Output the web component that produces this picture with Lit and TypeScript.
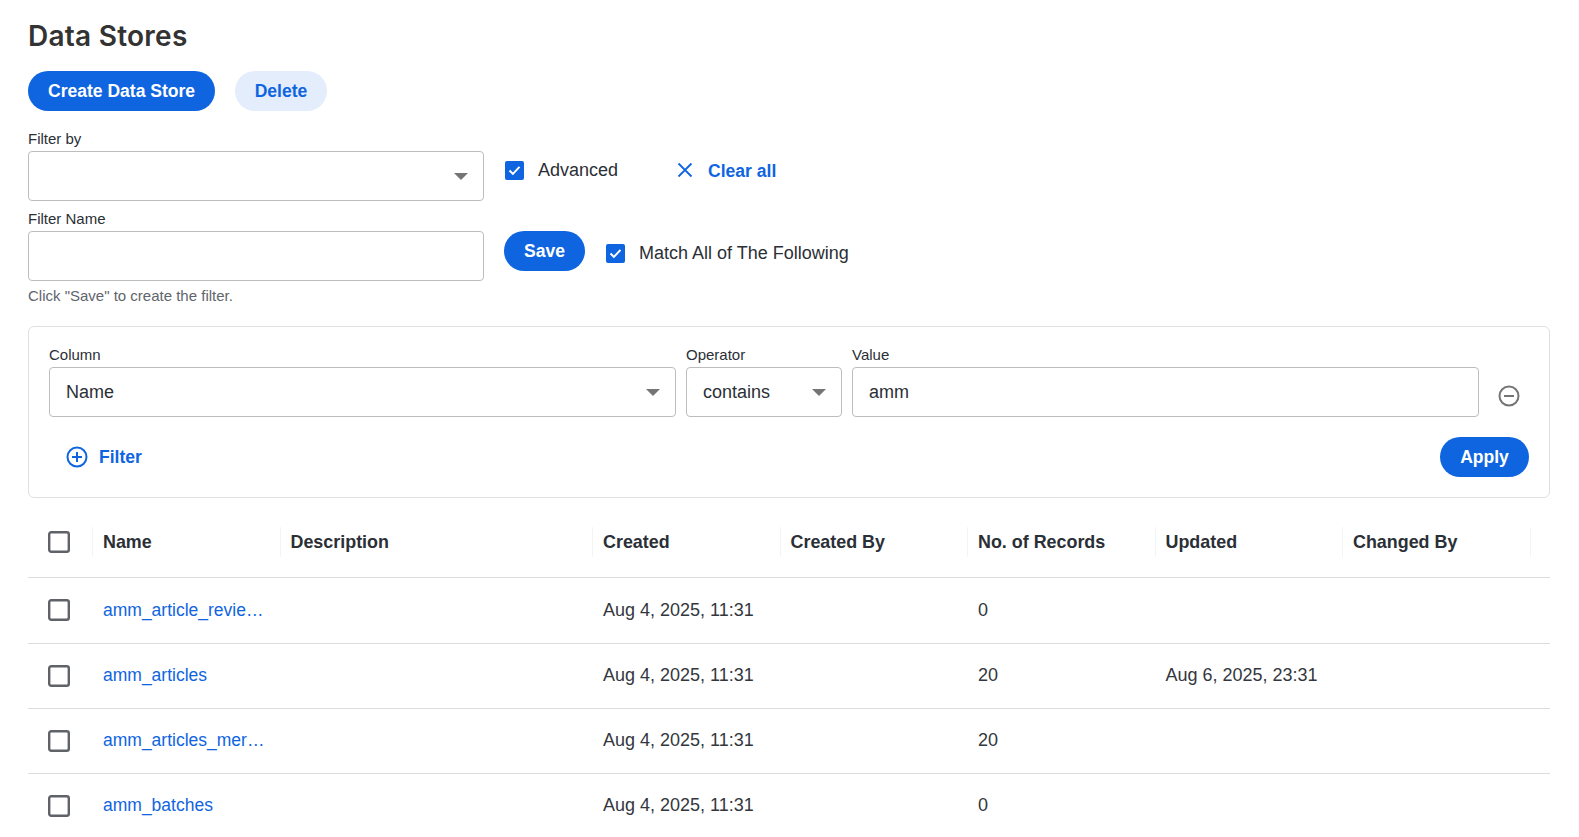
import { LitElement, html, css } from "lit";
import { customElement } from "lit/decorators.js";

const check = html`<svg class="cb" width="19" height="19" viewBox="0 0 19 19"><rect width="19" height="19" rx="2" fill="#0f65e0"/><path d="M4.5 9.5l3.4 3.4 6.6-7" fill="none" stroke="#fff" stroke-width="2"/></svg>`;
const caret = html`<svg class="caret" width="14" height="7" viewBox="0 0 14 7"><path d="M0 0h14L7 7z" fill="#757575"/></svg>`;
const box = html`<svg width="24" height="24" viewBox="0 0 24 24"><rect x="2.2" y="2.2" width="19.6" height="19.6" rx="2" fill="#fff" stroke="#5f6368" stroke-width="2.4"/></svg>`;

const rows = [
  ["amm_article_revie…", "Aug 4, 2025, 11:31", "0", ""],
  ["amm_articles", "Aug 4, 2025, 11:31", "20", "Aug 6, 2025, 23:31"],
  ["amm_articles_mer…", "Aug 4, 2025, 11:31", "20", ""],
  ["amm_batches", "Aug 4, 2025, 11:31", "0", ""],
];

@customElement("app-root")
export class AppRoot extends LitElement {
  static styles = css`
    :host { display: block; height: 837px; overflow: hidden; background: #fff; font-family: "Liberation Sans", Arial, sans-serif; color: #2b2f36; }
    .page { padding: 16px 29px 0 28px; display: flex; flex-direction: column; }
    h1 { margin: 0; font: 600 28px/40px "Inter", sans-serif; color: #333; height: 55px; letter-spacing: 0.25px; }
    .actions { display: flex; gap: 20px; height: 40px; margin-bottom: 18px; }
    .btn { display: flex; align-items: center; justify-content: center; height: 40px; border-radius: 20px; padding: 0 20px; font-size: 17.55px; font-weight: 700; background: #0f65e0; color: #fff; box-sizing: border-box; }
    .btn.light { background: #e3edfc; color: #0f65e0; padding: 0 19.5px; }
    .label { font-size: 15px; line-height: 20px; height: 22px; color: #2b2f36; }
    .row { display: flex; }
    .col { width: 456px; display: flex; flex-direction: column; flex: none; }
    .ctl { height: 50px; border: 1px solid #bdbdbd; border-radius: 4px; box-sizing: border-box; display: flex; align-items: center; justify-content: space-between; padding: 0 15px 0 16px; font-size: 18px; background: #fff; }
    .caret { flex: none; }
    .top1 { margin-bottom: 8px; }
    .side { display: flex; align-items: center; }
    .opt { display: flex; align-items: center; gap: 14px; font-size: 18px; }
    .cb { display: block; flex: none; }
    .clear { display: flex; align-items: center; gap: 15px; font-size: 17.55px; font-weight: 700; color: #0f65e0; }
    .clear span { padding-top: 2px; }
    .hint { font-size: 15px; line-height: 20px; color: #60656c; margin-top: 5px; height: 20px; }
    .panel { margin-top: 20px; box-sizing: border-box; height: 172px; border: 1px solid #e0e0e0; border-radius: 6px; padding: 18px 20px 0; display: flex; flex-direction: column; }
    .fields { display: flex; gap: 10px; align-items: flex-end; }
    .f { display: flex; flex-direction: column; flex: none; }
    .f.a { width: 627px; }
    .f.b { width: 156px; }
    .minus { margin: 0 0 10px 9px; display: block; flex: none; }
    .foot { display: flex; justify-content: space-between; align-items: center; margin-top: 20px; }
    .add { display: flex; align-items: center; gap: 11px; margin-left: 17px; font-size: 17.55px; font-weight: 700; color: #0f65e0; }
    table { border-collapse: collapse; table-layout: fixed; width: 1522px; font-size: 18px; }
    thead th { height: 79px; padding: 10px 0 0; box-sizing: border-box; font-weight: 700; text-align: left; border-bottom: 1px solid #dcdcdc; }
    td { height: 65px; padding: 0 0 0 10px; border-bottom: 1px solid #dcdcdc; box-sizing: border-box; white-space: nowrap; overflow: hidden; color: #33373d; }
    tbody tr:first-child td { height: 66px; }
    th .in { height: 30px; padding-left: 10px; display: flex; align-items: center; border-right: 1px solid #f4f4f4; font-size: 17.9px; }
    th.c .in, td.c { padding-left: 19px; }
    td.c svg, th.c svg { display: block; }
    th.last .in { border-right: none; }
    a { color: #0f65e0; text-decoration: none; font-size: 17.5px; }
  `;
  render() {
    return html`<div class="page">
      <h1>Data Stores</h1>
      <div class="actions">
        <div class="btn">Create Data Store</div>
        <div class="btn light">Delete</div>
      </div>
      <div class="row top1">
        <div class="col">
          <div class="label">Filter by</div>
          <div class="ctl"><span></span>${caret}</div>
        </div>
        <div class="side" style="margin-top:22px;align-self:flex-start;height:38px">
          <div class="opt" style="margin-left:21px">${check}<span>Advanced</span></div>
          <div class="clear" style="margin-left:59px">
            <svg width="16" height="16" viewBox="0 0 16 16"><path d="M1.5 1.5l13 13M14.5 1.5l-13 13" stroke="#0f65e0" stroke-width="1.8" fill="none"/></svg>
            <span>Clear all</span>
          </div>
        </div>
      </div>
      <div class="row">
        <div class="col">
          <div class="label">Filter Name</div>
          <div class="ctl"></div>
          <div class="hint">Click "Save" to create the filter.</div>
        </div>
        <div class="side" style="margin-top:22px;align-self:flex-start">
          <div class="btn" style="margin-left:20px;width:81px;padding:0">Save</div>
          <div class="opt" style="margin-left:21px;margin-top:5px">${check}<span>Match All of The Following</span></div>
        </div>
      </div>
      <div class="panel">
        <div class="fields">
          <div class="f a"><div class="label">Column</div><div class="ctl">Name ${caret}</div></div>
          <div class="f b"><div class="label">Operator</div><div class="ctl">contains ${caret}</div></div>
          <div class="f a"><div class="label">Value</div><div class="ctl">amm</div></div>
          <svg class="minus" width="22" height="22" viewBox="0 0 22 22" fill="none" stroke="#757575" stroke-width="2"><circle cx="11" cy="11" r="9.5"/><path d="M6 11h10"/></svg>
        </div>
        <div class="foot">
          <div class="add">
            <svg width="22" height="22" viewBox="0 0 22 22" fill="none" stroke="#0f65e0" stroke-width="2"><circle cx="11" cy="11" r="9.5"/><path d="M6 11h10M11 6v10"/></svg>
            <span>Filter</span>
          </div>
          <div class="btn" style="width:89px;padding:0">Apply</div>
        </div>
      </div>
      <table>
        <colgroup><col style="width:65px"/><col style="width:187.5px"/><col style="width:312.5px"/><col style="width:187.5px"/><col style="width:187.5px"/><col style="width:187.5px"/><col style="width:187.5px"/><col style="width:187.5px"/><col/></colgroup>
        <thead><tr>
          <th class="c"><div class="in">${box}</div></th>
          ${["Name","Description","Created","Created By","No. of Records","Updated","Changed By"].map(h=>html`<th><div class="in">${h}</div></th>`)}
          <th class="last"></th>
        </tr></thead>
        <tbody>
          ${rows.map(r=>html`<tr>
            <td class="c">${box}</td>
            <td><a>${r[0]}</a></td><td></td><td>${r[1]}</td><td></td><td>${r[2]}</td><td>${r[3]}</td><td></td><td></td>
          </tr>`)}
        </tbody>
      </table>
    </div>`;
  }
}
